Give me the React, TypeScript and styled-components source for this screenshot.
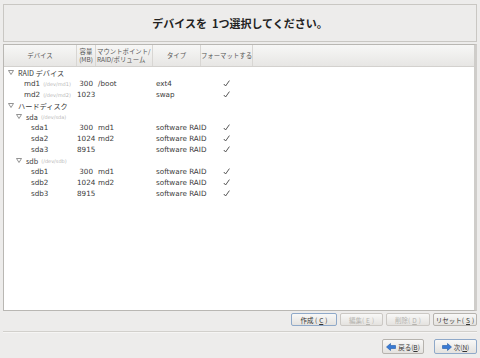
import React from 'react'
import styled, { createGlobalStyle } from 'styled-components'

const GlobalStyle = createGlobalStyle`
  html, body {
    margin: 0;
    padding: 0;
    background: #edeceb;
  }
  body {
    font-family: 'DejaVu Sans', 'Noto Sans CJK JP', sans-serif;
    color: #2e3436;
  }
`

const Page = styled.div`
  width: 480px;
  height: 358px;
  box-sizing: border-box;
  padding: 4px 3px 0 3px;
  display: flex;
  flex-direction: column;
  overflow: hidden;
`

const TitleBox = styled.div`
  height: 38px;
  box-sizing: border-box;
  border: 1px solid #c9c7c3;
  display: flex;
  align-items: center;
  justify-content: center;
  font-family: 'Noto Sans CJK JP', 'DejaVu Sans', sans-serif;
  font-size: 11px;
  font-weight: 700;
  color: #222;
  white-space: pre;
`

const Panel = styled.div`
  margin-top: 2px;
  height: 267px;
  box-sizing: border-box;
  border: 1px solid #b9b7b3;
  border-right: 3px solid #cfcdca;
  background: #fff;
  display: flex;
  flex-direction: column;
`

const cols = '73px 19px 57px 48px 52px 1fr'

const HeaderRow = styled.div`
  display: grid;
  grid-template-columns: ${cols};
  height: 21px;
  background: linear-gradient(#f7f7f6, #e7e6e4);
  border-bottom: 1px solid #d3d1ce;
  font-family: 'Noto Sans CJK JP', 'DejaVu Sans', sans-serif;
  font-size: 6.4px;
  color: #555;
`

const HeadCell = styled.div<{ align?: string }>`
  display: flex;
  align-items: center;
  justify-content: ${(p) => p.align || 'center'};
  padding: 0 1px;
  border-right: 1px solid #d8d6d3;
  line-height: 8px;
  white-space: pre;
  overflow: hidden;
  text-align: ${(p) => (p.align === 'flex-start' ? 'left' : 'center')};

  &:last-child {
    border-right: none;
  }
`

const Body = styled.div`
  padding-top: 0;
`

const Row = styled.div`
  display: grid;
  grid-template-columns: ${cols};
  height: 11px;
  align-items: center;
  font-size: 7.2px;
  color: #3a3a3a;
`

const DeviceCell = styled.div<{ indent: number }>`
  display: flex;
  align-items: center;
  padding-left: ${(p) => p.indent}px;
  white-space: nowrap;
  overflow: hidden;
`

const Expander = styled.svg`
  width: 6px;
  height: 5px;
  margin-right: 4px;
  flex: none;
`

const DevPath = styled.span`
  font-size: 5px;
  color: #b9b9b9;
  margin-left: 3px;
`

const Jp = styled.span`
  font-family: 'Noto Sans CJK JP', 'DejaVu Sans', sans-serif;
`

const SizeCell = styled.div`
  text-align: right;
  padding-right: 3px;
`

const TextCell = styled.div<{ pad?: number }>`
  padding-left: ${(p) => p.pad ?? 2}px;
  white-space: nowrap;
`

const CheckCell = styled.div`
  display: flex;
  justify-content: center;
  padding-right: 2px;
`

const ButtonBar = styled.div`
  display: flex;
  justify-content: flex-end;
  gap: 3px;
  margin-top: 2px;
`

const Button = styled.button<{ w: number; focused?: boolean }>`
  width: ${(p) => p.w}px;
  height: 13px;
  box-sizing: border-box;
  padding: 0;
  border: 1px solid ${(p) => (p.focused ? '#8fa9c9' : p.disabled ? '#cbc8c4' : '#b6b3ae')};
  border-radius: 2px;
  background: linear-gradient(#f8f8f7, #e4e2df);
  font-family: 'Noto Sans CJK JP', 'DejaVu Sans', sans-serif;
  font-size: 6.5px;
  color: ${(p) => (p.disabled ? '#b5b3af' : '#333')};
  display: flex;
  align-items: center;
  justify-content: center;
  gap: 2px;
  white-space: pre;

  u {
    text-decoration: underline;
  }
`

const Separator = styled.div`
  margin-top: 5px;
  height: 0;
  border-top: 1px solid #d2d0cc;
  border-bottom: 1px solid #f6f5f4;
`

const NavBar = styled.div`
  display: flex;
  justify-content: flex-end;
  gap: 10px;
  margin-top: 6px;
`

const NavButton = styled(Button)`
  height: 15px;
`

function Tri() {
  return (
    <Expander viewBox="0 0 6 5">
      <path d="M0.5 0.5 L5.5 0.5 L3 4.5 Z" fill="#fff" stroke="#777" strokeWidth="0.8" />
    </Expander>
  )
}

function Check() {
  return (
    <svg width="7" height="7" viewBox="0 0 7 7">
      <path d="M0.8 4 L2.6 6 L6.4 0.6" fill="none" stroke="#444" strokeWidth="0.9" />
    </svg>
  )
}

function Arrow({ dir }: { dir: 'left' | 'right' }) {
  const d =
    dir === 'left'
      ? 'M0.5 4 L4.5 0.5 L4.5 2.5 L9.5 2.5 L9.5 5.5 L4.5 5.5 L4.5 7.5 Z'
      : 'M9.5 4 L5.5 0.5 L5.5 2.5 L0.5 2.5 L0.5 5.5 L5.5 5.5 L5.5 7.5 Z'
  return (
    <svg width="10" height="8" viewBox="0 0 10 8">
      <path d={d} fill="#3a7bd5" stroke="#1f5aa8" strokeWidth="0.6" />
    </svg>
  )
}

type Item =
  | { kind: 'group'; label: string; indent: number; path?: string }
  | { kind: 'part'; name: string; path?: string; indent: number; size: string; mount: string; type: string; fmt: boolean }

const items: Item[] = [
  { kind: 'group', label: 'RAID デバイス', indent: 4 },
  { kind: 'part', name: 'md1', path: '(/dev/md1)', indent: 20, size: '300', mount: '/boot', type: 'ext4', fmt: true },
  { kind: 'part', name: 'md2', path: '(/dev/md2)', indent: 20, size: '1023', mount: '', type: 'swap', fmt: true },
  { kind: 'group', label: 'ハードディスク', indent: 4 },
  { kind: 'group', label: 'sda', path: '(/dev/sda)', indent: 12 },
  { kind: 'part', name: 'sda1', indent: 27, size: '300', mount: 'md1', type: 'software RAID', fmt: true },
  { kind: 'part', name: 'sda2', indent: 27, size: '1024', mount: 'md2', type: 'software RAID', fmt: true },
  { kind: 'part', name: 'sda3', indent: 27, size: '8915', mount: '', type: 'software RAID', fmt: true },
  { kind: 'group', label: 'sdb', path: '(/dev/sdb)', indent: 12 },
  { kind: 'part', name: 'sdb1', indent: 27, size: '300', mount: 'md1', type: 'software RAID', fmt: true },
  { kind: 'part', name: 'sdb2', indent: 27, size: '1024', mount: 'md2', type: 'software RAID', fmt: true },
  { kind: 'part', name: 'sdb3', indent: 27, size: '8915', mount: '', type: 'software RAID', fmt: true },
]

export default function App() {
  return (
    <>
      <GlobalStyle />
      <Page>
        <TitleBox>{'デバイスを  1つ選択してください。'}</TitleBox>
        <Panel>
          <HeaderRow>
            <HeadCell>デバイス</HeadCell>
            <HeadCell>{'容量\n(MB)'}</HeadCell>
            <HeadCell align="flex-start">{'マウントポイント/\nRAID/ボリューム'}</HeadCell>
            <HeadCell>タイプ</HeadCell>
            <HeadCell>フォーマットする</HeadCell>
            <HeadCell />
          </HeaderRow>
          <Body>
            {items.map((it, i) =>
              it.kind === 'group' ? (
                <Row key={i}>
                  <DeviceCell indent={it.indent} style={{ gridColumn: '1 / 3' }}>
                    <Tri />
                    <Jp>{it.label}</Jp>
                    {it.path && <DevPath>{it.path}</DevPath>}
                  </DeviceCell>
                </Row>
              ) : (
                <Row key={i}>
                  <DeviceCell indent={it.indent}>
                    {it.name}
                    {it.path && <DevPath>{it.path}</DevPath>}
                  </DeviceCell>
                  <SizeCell>{it.size}</SizeCell>
                  <TextCell>{it.mount}</TextCell>
                  <TextCell pad={3}>{it.type}</TextCell>
                  <CheckCell>{it.fmt && <Check />}</CheckCell>
                  <div />
                </Row>
              )
            )}
          </Body>
        </Panel>
        <ButtonBar>
          <Button w={46} focused>
            作成 (<u>C</u>)
          </Button>
          <Button w={43} disabled>
            編集(<u>E</u>)
          </Button>
          <Button w={44} disabled>
            削除(<u>D</u>)
          </Button>
          <Button w={44}>
            リセット(<u>S</u>)
          </Button>
        </ButtonBar>
        <Separator />
        <NavBar>
          <NavButton w={42}>
            <Arrow dir="left" />
            <span>
              戻る(<u>B</u>)
            </span>
          </NavButton>
          <NavButton w={43} focused>
            <Arrow dir="right" />
            <span>
              次(<u>N</u>)
            </span>
          </NavButton>
        </NavBar>
      </Page>
    </>
  )
}
